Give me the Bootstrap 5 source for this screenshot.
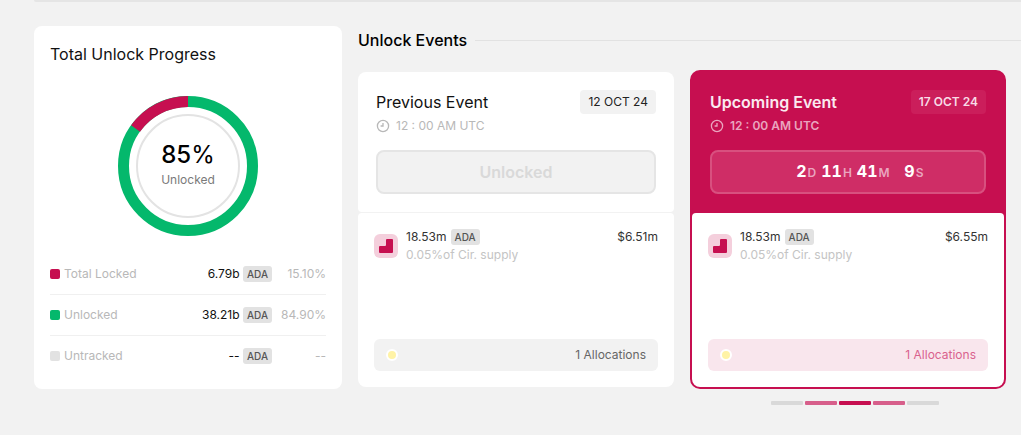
<!DOCTYPE html>
<html lang="en">
<head>
<meta charset="utf-8">
<meta name="viewport" content="width=device-width, initial-scale=1">
<title>Token unlocks</title>
<link href="https://cdn.jsdelivr.net/npm/bootstrap@5.3.0/dist/css/bootstrap.min.css" rel="stylesheet">
<style>
:root{--brand:#c60f50;--green:#04b86c;--page:#f2f2f2;--line:#e5e5e5;--muted:#b8b8b8}
body{background:var(--page);color:#111;font-family:Inter,"Liberation Sans",sans-serif;font-size:12px;line-height:18px}
.top-edge{height:2px;margin-left:34px;background:var(--line);border-bottom-left-radius:4px}
.layout{gap:16px;padding:24px 0 24px 34px}
.progress-panel{flex:0 0 308px;background:#fff;border-radius:8px;padding:16px 16px 12px}
.title-text{font-size:16px;line-height:24px;font-weight:400;margin:0}
.donut{width:140px;height:140px;margin:30px auto 18px}
.donut-label{inset:0}
.donut-value{font-size:24px;line-height:32px;font-weight:500;color:#000}
.donut-label small{font-size:12px;color:#7a7a7a}
.breakdown{width:100%;border-collapse:separate;border-spacing:0}
.breakdown th,.breakdown td{height:41px;padding:0;border-bottom:1px solid #f0f0f0;font-weight:400;vertical-align:middle}
.breakdown tr:last-child>*{border-bottom-color:transparent}
.breakdown th,.breakdown .pct{color:var(--muted)}
.breakdown .pct{width:54px}
.swatch{width:10px;height:10px;border-radius:2px}
.swatch-locked{background:var(--brand)}
.swatch-unlocked{background:var(--green)}
.swatch-untracked{background:#e2e2e2}
.ticker{display:inline-block;background:#e2e2e2;color:#555;border-radius:3px;font-size:10px;line-height:16px;font-weight:500;padding:0 4px}
.events-head{gap:8px;height:28px}
.events-head h2{font-weight:500;color:#000}
.events-head hr{margin:0;border-top:1px solid #e2e2e2;opacity:1}
.events{display:grid;grid-template-columns:repeat(2,minmax(0,1fr));gap:16px;padding-right:15px;margin-top:16px}
.event{border-radius:8px;margin:2px 0}
.event-top{background:#fff;border-radius:8px 8px 4px 4px;padding:18px;margin-bottom:1px}
.event-body{background:#fff;border-radius:4px 4px 8px 8px;padding:16px;height:174px}
.date-chip{background:var(--page);border-radius:4px;line-height:24px;padding:0 8px;color:#222}
.time-row{gap:6px;line-height:24px;color:var(--muted)}
.state-box{height:44px;margin-top:12px;border:2px solid var(--line);border-radius:8px;background:var(--page);font-size:16px;font-weight:600;color:#d9d9d9;padding:0}
.token-icon{width:24px;height:24px;margin-top:5px}
.amount{color:#333;line-height:16px}
.supply{color:#c4c4c4;line-height:20px}
.alloc{height:32px;border-radius:6px;background:var(--page);padding:0 12px;color:#666}
.dot{width:12px;height:12px;border-radius:50%;border:2px solid #fff;background:#fff3a6}
.event.upcoming{margin:0;border:2px solid var(--brand);background:var(--brand);border-radius:10px}
.upcoming .event-top{background:var(--brand);color:#fff}
.upcoming .title-text{font-weight:600;color:#fbe9f0}
.upcoming .date-chip{background:#cb1e5b;color:#f8dbe6;font-weight:600}
.upcoming .time-row{color:#eaa5bf;font-weight:600}
.upcoming .state-box{background:#cf2d66;border-color:#d8507f;color:#fff;font-weight:700;line-height:20px;font-variant-numeric:tabular-nums;padding-left:14px}
.upcoming .alloc{background:#f9e6ed;color:#d9628d}
.countdown{gap:5px}
.unit-n{display:inline-block;min-width:20px;text-align:right}
.unit-l{font-size:12px;font-weight:600;color:#eaa5bf;padding-left:1px}
.pager{gap:2px;margin-top:12px}
.pager i{width:32px;height:4px;border-radius:1px;background:#d9d9d9}
.pager .near{background:#d75f8b}
.pager .now{background:var(--brand)}
</style>
</head>
<body>
<div class="top-edge"></div>
<main class="layout d-flex align-items-start">
  <section class="progress-panel">
    <h2 class="title-text">Total Unlock Progress</h2>
    <div class="donut position-relative">
      <svg class="d-block" width="140" height="140" viewBox="0 0 140 140" fill="none" aria-hidden="true">
        <g transform="rotate(-90 70 70)" stroke-width="11">
          <circle cx="70" cy="70" r="64.5" stroke="#04b86c"/>
          <circle cx="70" cy="70" r="64.5" stroke="#c60f50" pathLength="100" stroke-dasharray="15.1 84.9" stroke-dashoffset="-84.9"/>
        </g>
        <circle cx="70" cy="70" r="51" stroke="#e3e3e3" stroke-width="2"/>
      </svg>
      <div class="donut-label position-absolute d-flex flex-column align-items-center justify-content-center pb-1">
        <span class="donut-value">85<span class="fw-normal">%</span></span>
        <small>Unlocked</small>
      </div>
    </div>
    <table class="breakdown">
      <tr><th scope="row"><span class="d-flex align-items-center gap-1"><span class="swatch swatch-locked"></span>Total Locked</span></th><td class="text-end">6.79b <span class="ticker">ADA</span></td><td class="pct text-end">15.10%</td></tr>
      <tr><th scope="row"><span class="d-flex align-items-center gap-1"><span class="swatch swatch-unlocked"></span>Unlocked</span></th><td class="text-end">38.21b <span class="ticker">ADA</span></td><td class="pct text-end">84.90%</td></tr>
      <tr><th scope="row"><span class="d-flex align-items-center gap-1"><span class="swatch swatch-untracked"></span>Untracked</span></th><td class="text-end">-- <span class="ticker">ADA</span></td><td class="pct text-end">--</td></tr>
    </table>
  </section>

  <section class="flex-grow-1">
    <div class="events-head d-flex align-items-center">
      <h2 class="title-text">Unlock Events</h2>
      <hr class="flex-grow-1">
    </div>
    <div class="events">
      <article class="event">
        <div class="event-top">
          <div class="d-flex justify-content-between">
            <h3 class="title-text">Previous Event</h3>
            <span class="date-chip">12 OCT 24</span>
          </div>
          <div class="time-row d-flex align-items-center">
            <svg width="14" height="14" viewBox="0 0 14 14" fill="none" stroke="currentColor" stroke-width="1.3" aria-hidden="true"><circle cx="7" cy="7" r="5.6"/><path d="M7 4v3H4.6"/></svg>
            12 : 00 AM UTC
          </div>
          <button type="button" class="state-box d-block w-100" disabled>Unlocked</button>
        </div>
        <div class="event-body d-flex flex-column justify-content-between">
          <div class="d-flex gap-2">
            <svg class="token-icon" viewBox="0 0 24 24" aria-hidden="true"><rect width="24" height="24" rx="6" fill="#f4cfdc"/><path d="M13 5h5a1 1 0 0 1 1 1v12a1 1 0 0 1-1 1H6a1 1 0 0 1-1-1v-5a1 1 0 0 1 1-1h5a1 1 0 0 0 1-1V6a1 1 0 0 1 1-1z" fill="#c60f50"/></svg>
            <div class="flex-grow-1">
              <div class="amount d-flex align-items-center gap-1">18.53m <span class="ticker">ADA</span><span class="ms-auto">$6.51m</span></div>
              <div class="supply">0.05%of Cir. supply</div>
            </div>
          </div>
          <div class="alloc d-flex align-items-center justify-content-between"><span class="dot"></span>1 Allocations</div>
        </div>
      </article>

      <article class="event upcoming">
        <div class="event-top">
          <div class="d-flex justify-content-between">
            <h3 class="title-text">Upcoming Event</h3>
            <span class="date-chip">17 OCT 24</span>
          </div>
          <div class="time-row d-flex align-items-center">
            <svg width="14" height="14" viewBox="0 0 14 14" fill="none" stroke="currentColor" stroke-width="1.3" aria-hidden="true"><circle cx="7" cy="7" r="5.6"/><path d="M7 4v3H4.6"/></svg>
            12 : 00 AM UTC
          </div>
          <div class="state-box d-flex align-items-center justify-content-center" role="timer">
            <div class="countdown d-flex align-items-baseline">
              <span><span class="unit-n">2</span><span class="unit-l">D</span></span>
              <span><span class="unit-n">11</span><span class="unit-l">H</span></span>
              <span><span class="unit-n">41</span><span class="unit-l">M</span></span>
              <span><span class="unit-n">9</span><span class="unit-l">S</span></span>
            </div>
          </div>
        </div>
        <div class="event-body d-flex flex-column justify-content-between">
          <div class="d-flex gap-2">
            <svg class="token-icon" viewBox="0 0 24 24" aria-hidden="true"><rect width="24" height="24" rx="6" fill="#f4cfdc"/><path d="M13 5h5a1 1 0 0 1 1 1v12a1 1 0 0 1-1 1H6a1 1 0 0 1-1-1v-5a1 1 0 0 1 1-1h5a1 1 0 0 0 1-1V6a1 1 0 0 1 1-1z" fill="#c60f50"/></svg>
            <div class="flex-grow-1">
              <div class="amount d-flex align-items-center gap-1">18.53m <span class="ticker">ADA</span><span class="ms-auto">$6.55m</span></div>
              <div class="supply">0.05%of Cir. supply</div>
            </div>
          </div>
          <div class="alloc d-flex align-items-center justify-content-between"><span class="dot"></span>1 Allocations</div>
        </div>
      </article>
    </div>
    <div class="row g-0">
      <div class="col-6 offset-6 pager d-flex justify-content-center"><i></i><i class="near"></i><i class="now"></i><i class="near"></i><i></i></div>
    </div>
  </section>
</main>
<script src="https://cdn.jsdelivr.net/npm/bootstrap@5.3.0/dist/js/bootstrap.bundle.min.js"></script>
</body>
</html>
